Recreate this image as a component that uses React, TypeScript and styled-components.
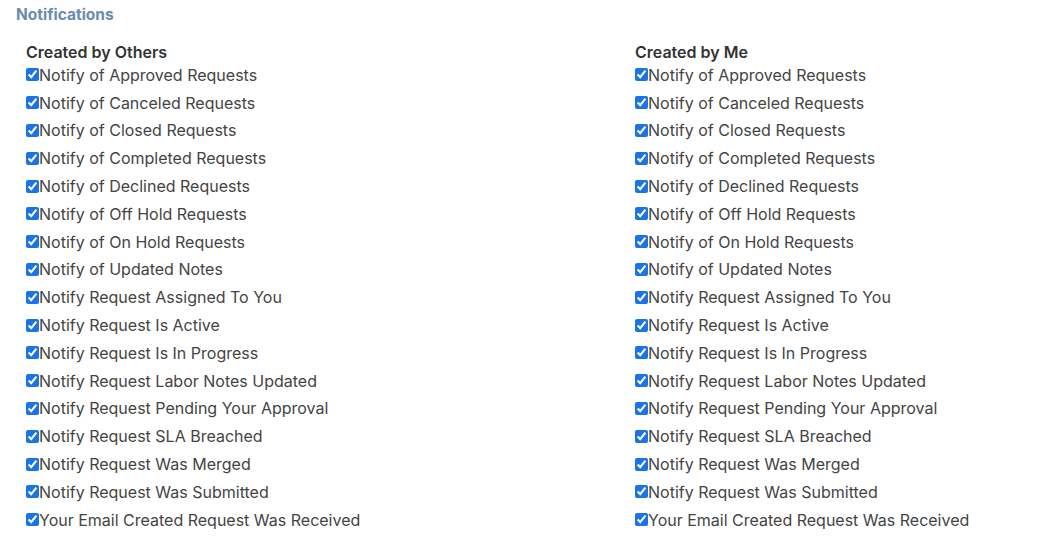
import React from 'react';
import styled, {createGlobalStyle} from "styled-components";

const items = [
    'Notify of Approved Requests',
    'Notify of Canceled Requests',
    'Notify of Closed Requests',
    'Notify of Completed Requests',
    'Notify of Declined Requests',
    'Notify of Off Hold Requests',
    'Notify of On Hold Requests',
    'Notify of Updated Notes',
    'Notify Request Assigned To You',
    'Notify Request Is Active',
    'Notify Request Is In Progress',
    'Notify Request Labor Notes Updated',
    'Notify Request Pending Your Approval',
    'Notify Request SLA Breached',
    'Notify Request Was Merged',
    'Notify Request Was Submitted',
    'Your Email Created Request Was Received',
]

const GlobalStyle = createGlobalStyle`
  body {
    margin: 0;
    background: #fff;
    font-family: Inter, "Noto Sans", sans-serif;
    color: #444;
  }
`

type ColumnPropsType = {
    title: string
    group: string
}
const NotifyColumn: React.FC<ColumnPropsType> = (props) => {
    return (
        <StyledColumn>
            <StyledColumnTitle>{props.title}</StyledColumnTitle>
            {items.map((text, i) => (
                <StyledOption key={text}>
                    <StyledCheck type="checkbox" defaultChecked name={`${props.group}-${i}`} />
                    {text}
                </StyledOption>
            ))}
        </StyledColumn>
    );
}

export default function App() {
    return (
        <>
            <GlobalStyle />
            <StyledPanel>
                <StyledPanelTitle>Notifications</StyledPanelTitle>
                <StyledColumns>
                    <NotifyColumn title="Created by Others" group="others" />
                    <NotifyColumn title="Created by Me" group="me" />
                </StyledColumns>
            </StyledPanel>
        </>
    );
}

const StyledPanel = styled.div`
  padding: 5px 16px 0;
`
const StyledPanelTitle = styled.div`
  font-size: 15.5px;
  font-weight: 700;
  line-height: 20px;
  color: #6a8bb0;
`
const StyledColumns = styled.div`
  display: grid;
  grid-template-columns: 609px 1fr;
  padding: 17px 0 0 10px;
`
const StyledColumn = styled.div`
  display: flex;
  flex-direction: column;
`
const StyledColumnTitle = styled.div`
  font-size: 16px;
  font-weight: 600;
  line-height: 20px;
  margin-bottom: -1px;
  color: #333;
`
const StyledOption = styled.label`
  display: flex;
  align-items: center;
  height: 27.8px;
  font-size: 16px;
  color: #444;
  white-space: nowrap;
`
const StyledCheck = styled.input`
  width: 13px;
  height: 13px;
  margin: 0;
  accent-color: #1a73e8;
`
